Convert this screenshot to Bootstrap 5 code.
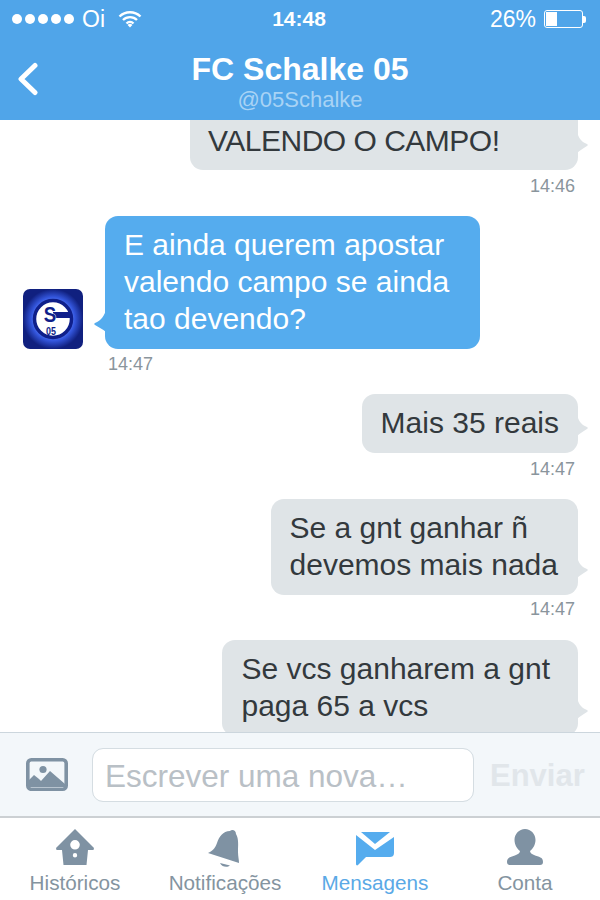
<!DOCTYPE html>
<html lang="pt">

<head>
  <meta charset="UTF-8">
  <title>Mensagens</title>
  <link href="https://cdn.jsdelivr.net/npm/bootstrap@5.3.0/dist/css/bootstrap.min.css" rel="stylesheet">
  <style>
    body { font-family: "Liberation Sans", Arial, sans-serif; color: #33393d; background: #fff; }
    .phone { height: 900px; }
    .topbar { height: 120px; background: #50a5e9; color: #fff; flex: none; }
    .status-row { height: 38px; padding: 0 14px 0 12px; font-size: 23px; }
    .status-side { width: 200px; }
    .dot { width: 10px; height: 10px; background: #fff; border-radius: 50%; }
    .dots { gap: 3px; }
    .wifi-icon { margin-left: 13px; }
    .clock { font-weight: 700; font-size: 21px; }
    .batt { width: 39px; height: 18px; border: 1px solid #fff; border-radius: 3px; padding: 1px; }
    .batt-fill { width: 11px; background: #fff; }
    .batt-tip { width: 3px; height: 7px; background: #fff; border-radius: 0 2px 2px 0; }
    .title-name { font-size: 32px; font-weight: 700; line-height: 36px; padding-top: 13px; }
    .title-handle { font-size: 22px; line-height: 26px; color: #a8d3f5; }
    .back-icon { left: 17px; top: 62px; }
    .thread { min-height: 0; overflow: hidden; }
    .msg { font-size: 30px; line-height: 37px; padding: 10px 19px 12px; border-radius: 13px; position: relative; white-space: nowrap; }
    .msg-out { background: #dfe4e7; margin-right: 22px; }
    .msg-in { background: #55acee; color: #fff; width: 375px; }
    .pad-mid { padding-right: 20px; }
    .pad-wide { padding-right: 28px; }
    .tail { position: absolute; bottom: 17px; }
    .msg-out .tail { right: -11px; }
    .msg-in .tail { left: -12px; }
    .stamp { font-size: 18px; line-height: 22px; color: #8a959c; }
    .stamp-out { margin: 5px 25px 0 0; text-align: right; }
    .stamp-tight { margin-top: 3px; }
    .stamp-in { margin: 4px 0 0 108px; }
    .first-msg { margin-top: -27px; width: 388px; height: 77px; padding: 29px 0 0 18px; }
    .caps-line { letter-spacing: -.5px; }
    .next-msg { margin-top: 19px; }
    .next-wide { margin-top: 20px; }
    .avatar { width: 60px; height: 60px; border-radius: 7px; flex: none; display: block; }
    .left-row { padding-left: 23px; gap: 22px; }
    .composer { height: 86px; flex: none; background: #f3f7fa; border-top: 1px solid #ccd6dd; border-bottom: 2px solid #ccd0d3; padding: 0 10px 0 26px; }
    .pic-icon { flex: none; margin-right: 24px; }
    .composer .form-control { height: 54px; width: 382px; flex: none; border: 1px solid #d5dde2; border-radius: 11px; font-size: 31.5px; padding: 4px 12px 0; box-shadow: none; }
    .composer .form-control::placeholder { color: #b9c0c6; opacity: 1; }
    .send-label { font-size: 31px; font-weight: 700; color: #e1e6ea; margin-left: 16px; padding-top: 4px; }
    .tabs { height: 82px; flex: none; background: #fff; }
    .tab-item { text-align: center; color: #8494a0; font-size: 20.7px; line-height: 24px; padding-top: 11px; }
    .tab-item svg { display: block; margin: 0 auto 2px; }
    .tab-active { color: #5aa9e6; }
  </style>
</head>

<body>
  <div class="phone d-flex flex-column overflow-hidden position-relative">

    <header class="topbar position-relative">
      <div class="status-row d-flex align-items-center justify-content-between">
        <div class="status-side d-flex align-items-center">
          <div class="dots d-flex">
            <span class="dot"></span><span class="dot"></span><span class="dot"></span><span class="dot"></span><span class="dot"></span>
          </div>
          <span class="ms-2">Oi</span>
          <svg class="wifi-icon" width="24" height="18" viewBox="0 0 24 18">
            <path d="M1.500 6.500a15 15 0 0 1 21 0M5 10a10 10 0 0 1 14 0M8.500 13.500a5 5 0 0 1 7 0" fill="none" stroke="#fff" stroke-width="2.400"/>
            <path d="M9.600 15 12 17.600 14.400 15a3.500 3.500 0 0 0-4.800 0z" fill="#fff"/>
          </svg>
        </div>
        <div class="clock">14:48</div>
        <div class="status-side d-flex align-items-center justify-content-end">
          <span class="me-2">26%</span>
          <div class="batt d-flex"><div class="batt-fill"></div></div>
          <div class="batt-tip"></div>
        </div>
      </div>
      <div class="text-center">
        <div class="title-name">FC Schalke 05</div>
        <div class="title-handle">@05Schalke</div>
      </div>
      <svg class="back-icon position-absolute" width="22" height="34" viewBox="0 0 22 34">
        <path d="M18 3.500 4 17l14 13.500" fill="none" stroke="#fff" stroke-width="5" stroke-linecap="round" stroke-linejoin="round"/>
      </svg>
    </header>

    <main class="thread flex-grow-1">
      <div class="msg msg-out first-msg ms-auto">
        <span class="caps-line">VALENDO O CAMPO!</span>
        <svg class="tail" width="12" height="22" viewBox="0 0 12 22"><path d="M0 0c1 6 4 11 10 13 1 .5 1 1.500 0 2-3 2-7 4-10 7z" fill="#dfe4e7"/></svg>
      </div>
      <div class="stamp stamp-out">14:46</div>

      <div class="left-row d-flex align-items-end next-msg">
        <svg class="avatar" viewBox="0 0 60 60">
          <defs>
            <radialGradient id="glow"><stop offset="0.35" stop-color="#a9c4f8"/><stop offset="0.72" stop-color="#3558e0"/><stop offset="1" stop-color="#10207f"/></radialGradient>
          </defs>
          <rect width="60" height="60" fill="url(#glow)"/>
          <circle cx="30" cy="30" r="18.500" fill="#fff" stroke="#0f1f8a" stroke-width="3.500"/>
          <rect x="30" y="23" width="17" height="6" fill="#0f1f8a"/>
          <text transform="translate(27 32.500) scale(.85 1)" text-anchor="middle" font-family="Liberation Sans" font-weight="700" font-size="22" fill="#0f1f8a" stroke="#fff" stroke-width="1" paint-order="stroke">S</text>
          <text transform="translate(28 46) scale(.85 1)" text-anchor="middle" font-family="Liberation Sans" font-weight="700" font-size="10.500" fill="#0f1f8a">05</text>
        </svg>
        <div class="msg msg-in">
          E ainda querem apostar<br>valendo campo se ainda<br>tao devendo?
          <svg class="tail" width="13" height="23" viewBox="0 0 13 23"><path d="M13 0c-1 6-5 12-11 14-1 .5-1 1.500 0 2 3 2 8 4 11 7z" fill="#55acee"/></svg>
        </div>
      </div>
      <div class="stamp stamp-in">14:47</div>

      <div class="d-flex justify-content-end next-msg">
        <div class="msg msg-out">Mais 35 reais
          <svg class="tail" width="12" height="22" viewBox="0 0 12 22"><path d="M0 0c1 6 4 11 10 13 1 .5 1 1.500 0 2-3 2-7 4-10 7z" fill="#dfe4e7"/></svg>
        </div>
      </div>
      <div class="stamp stamp-out">14:47</div>

      <div class="d-flex justify-content-end next-msg">
        <div class="msg msg-out pad-mid">Se a gnt ganhar ñ<br>devemos mais nada
          <svg class="tail" width="12" height="22" viewBox="0 0 12 22"><path d="M0 0c1 6 4 11 10 13 1 .5 1 1.500 0 2-3 2-7 4-10 7z" fill="#dfe4e7"/></svg>
        </div>
      </div>
      <div class="stamp stamp-out stamp-tight">14:47</div>

      <div class="d-flex justify-content-end next-wide">
        <div class="msg msg-out pad-wide">Se vcs ganharem a gnt<br>paga 65 a vcs
          <svg class="tail" width="12" height="22" viewBox="0 0 12 22"><path d="M0 0c1 6 4 11 10 13 1 .5 1 1.500 0 2-3 2-7 4-10 7z" fill="#dfe4e7"/></svg>
        </div>
      </div>
    </main>

    <div class="composer d-flex align-items-center">
      <svg class="pic-icon" width="42" height="33" viewBox="0 0 42 33">
        <rect x="1.800" y="1.800" width="38.400" height="29.400" rx="3.500" fill="none" stroke="#7f92a3" stroke-width="3.600"/>
        <circle cx="17" cy="11.500" r="3.600" fill="#7f92a3"/>
        <path d="M3 29v-7l5-5 5 4 2 2 9-10 15 13v3z" fill="#7f92a3"/>
      </svg>
      <input type="text" class="form-control" placeholder="Escrever uma nova…">
      <span class="send-label">Enviar</span>
    </div>

    <nav class="tabs row g-0">
      <div class="col-3 tab-item">
        <svg width="40" height="40" viewBox="0 0 40 40">
          <path fill-rule="evenodd" d="M20 0 39 19l-.5 2H33l-1.500 15h-23L7 21H1.500L1 19zM20 11a4.800 4.800 0 1 0 0 9.600A4.800 4.800 0 0 0 20 11zm0 13a2.200 2.200 0 1 0 0 4.400 2.200 2.200 0 0 0 0-4.400z" fill="#7f92a3"/>
        </svg>
        Históricos
      </div>
      <div class="col-3 tab-item">
        <svg width="40" height="40" viewBox="0 0 40 40">
          <path d="M25 2c2-2 6-1 6 3 3 5 2 12 2 18 0 4 1 8 1 11L3 24c4-2 7-4 9-10 2-6 6-12 13-12z" fill="#7f92a3"/>
          <path d="M15 34l10 2.500c-3 2.500-8 1.500-10-2.500z" fill="#7f92a3"/>
        </svg>
        Notificações
      </div>
      <div class="col-3 tab-item tab-active">
        <svg width="40" height="40" viewBox="0 0 40 40">
          <path d="M1 6l19 15L39 8v16c0 3-2 4-4 4H11l-8 8c-1 1-2 0-2-1z" fill="#55acee"/>
          <path d="M6 3h29L20 15z" fill="#55acee"/>
        </svg>
        Mensagens
      </div>
      <div class="col-3 tab-item">
        <svg width="40" height="40" viewBox="0 0 40 40">
          <path d="M20 0c6 0 10.500 5 10.500 11 0 5-3 9-5.500 11 0 2 2 3 4 4 5 2 9 2 9 7 0 2-1 3-3 3H5c-2 0-3-1-3-3 0-5 4-5 9-7 2-1 4-2 4-4-2.500-2-5.500-6-5.500-11C9.500 5 14 0 20 0z" fill="#7f92a3"/>
        </svg>
        Conta
      </div>
    </nav>
  </div>

  <script src="https://cdn.jsdelivr.net/npm/bootstrap@5.3.0/dist/js/bootstrap.bundle.min.js"></script>
</body>

</html>
